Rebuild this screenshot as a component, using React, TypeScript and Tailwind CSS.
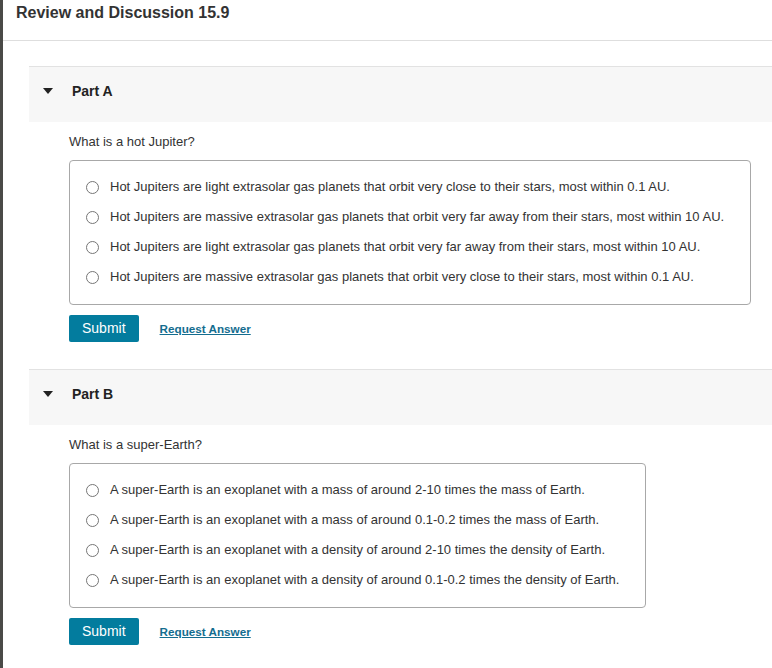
import { useState } from 'react'

type Part = {
  label: string
  question: string
  options: string[]
}

const parts: Part[] = [
  {
    label: 'Part A',
    question: 'What is a hot Jupiter?',
    options: [
      'Hot Jupiters are light extrasolar gas planets that orbit very close to their stars, most within 0.1 AU.',
      'Hot Jupiters are massive extrasolar gas planets that orbit very far away from their stars, most within 10 AU.',
      'Hot Jupiters are light extrasolar gas planets that orbit very far away from their stars, most within 10 AU.',
      'Hot Jupiters are massive extrasolar gas planets that orbit very close to their stars, most within 0.1 AU.',
    ],
  },
  {
    label: 'Part B',
    question: 'What is a super-Earth?',
    options: [
      'A super-Earth is an exoplanet with a mass of around 2-10 times the mass of Earth.',
      'A super-Earth is an exoplanet with a mass of around 0.1-0.2 times the mass of Earth.',
      'A super-Earth is an exoplanet with a density of around 2-10 times the density of Earth.',
      'A super-Earth is an exoplanet with a density of around 0.1-0.2 times the density of Earth.',
    ],
  },
]

function Radio({ checked }: { checked: boolean }) {
  return (
    <span className="w-[13px] h-[13px] rounded-full border border-[#767676] bg-white flex items-center justify-center shrink-0">
      {checked && <span className="w-[7px] h-[7px] rounded-full bg-[#333]" />}
    </span>
  )
}

function PartSection({ part }: { part: Part }) {
  const [choice, setChoice] = useState<number | null>(null)

  return (
    <section>
      {/* Collapsible header */}
      <div className="h-[56px] bg-[#f7f7f7] border-t border-[#e2e2e2] flex items-start pt-[14px] pl-[14px]">
        <span className="w-0 h-0 mt-[7px] border-l-[5px] border-r-[5px] border-t-[6px] border-l-transparent border-r-transparent border-t-[#222]" />
        <span className="ml-[19px] text-[14px] leading-[20px] font-bold text-[#222]">{part.label}</span>
      </div>

      <div className="pl-[40px] pt-[12px]">
        <p className="text-[13px] leading-[16px] text-[#333]">{part.question}</p>

        <div className="mt-[10px] inline-block border border-[#a8a8a8] rounded-[4px] pl-[16px] pr-[26px] pt-[11px] pb-[12px]">
          {part.options.map((opt, i) => (
            <label
              key={i}
              className="h-[30px] flex items-center gap-[11px] cursor-pointer"
              onClick={() => setChoice(i)}
            >
              <Radio checked={choice === i} />
              <span className="text-[13px] text-[#333] whitespace-nowrap">{opt}</span>
            </label>
          ))}
        </div>

        <div className="mt-[10px] flex items-center">
          <button className="h-[27px] px-[13px] bg-[#037c9e] text-white text-[14px] rounded-[2px]">Submit</button>
          <a href="#" className="ml-[21px] text-[11.7px] font-bold text-[#146d8f] underline">
            Request Answer
          </a>
        </div>
      </div>
    </section>
  )
}

export default function App() {
  return (
    <main className="min-h-[668px] bg-white flex" style={{ fontFamily: '"Liberation Sans", Arial, sans-serif' }}>
      <div className="w-[3px] bg-[#4a4a47] shrink-0" />
      <div className="flex-1">
        {/* Page title */}
        <div className="h-[41px] border-b border-[#dedede] pl-[13px] pt-[3px]">
          <h1 className="text-[16px] leading-[20px] font-bold text-[#333]">Review and Discussion 15.9</h1>
        </div>

        <div className="pl-[26px] pt-[25px] space-y-[27px]">
          {parts.map((p) => (
            <PartSection key={p.label} part={p} />
          ))}
        </div>
      </div>
    </main>
  )
}
